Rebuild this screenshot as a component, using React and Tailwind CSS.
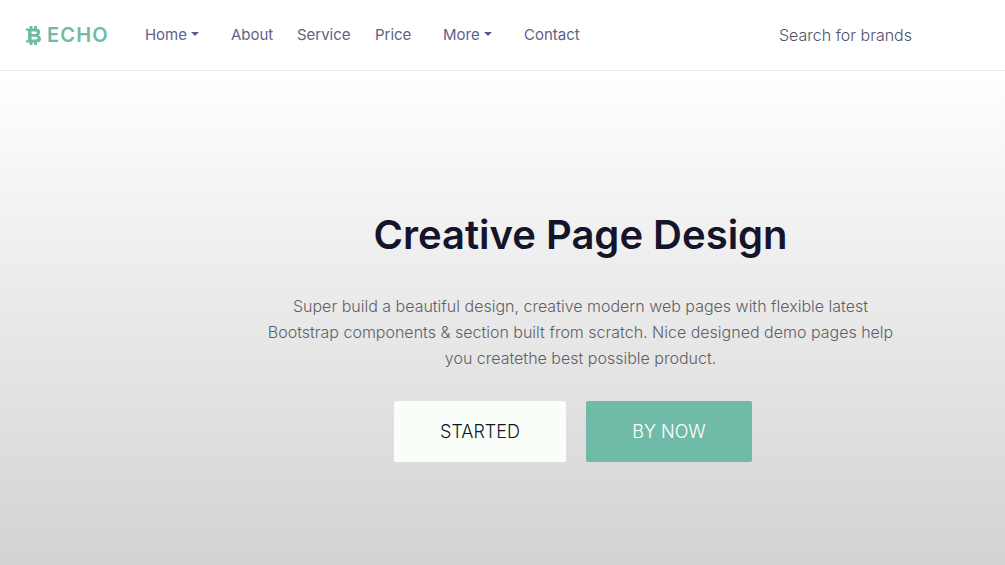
import React from "react";

const Caret = () => (
  <span className="ml-[4px] inline-block h-0 w-0 border-x-[4px] border-t-[4px] border-x-transparent border-t-[#5a5c82] align-[4px]" />
);

const Link = ({ className = "", children }) => (
  <a className={`text-[15px] leading-[24px] text-[#5f6186] whitespace-nowrap ${className}`}>{children}</a>
);

const Logo = () => (
  <svg viewBox="0 0 15 19" className="h-[19px] w-[15px]" fill="currentColor" fillRule="evenodd">
    <path d="M3.5 0H6.5V3H3.5ZM8 0H11V3H8ZM3.5 16H6.5V19H3.5ZM8 16H11V19H8Z" />
    <path d="M0 2.5H10Q14.2 2.5 14.2 6.3Q14.2 8.4 12.6 9.2Q15 10 15 12.8Q15 16.5 11 16.5H0V14.2H2V4.8H0ZM5.6 5.6V8H9.4Q10.8 8 10.8 6.8Q10.8 5.6 9.4 5.6ZM5.6 10.8V13.4H10Q11.6 13.4 11.6 12.1Q11.6 10.8 10 10.8Z" />
  </svg>
);

export default function App() {
  return (
    <div className="h-[565px] w-full overflow-hidden bg-white font-['Inter',sans-serif]">
      <header className="flex h-[71px] items-center border-b border-[#ebebed] bg-white pl-[26px]">
        <div className="flex items-center text-[#6fbba8]">
          <Logo />
          <span className="ml-[6px] text-[20px] font-semibold leading-[24px] tracking-[1.2px]">ECHO</span>
        </div>
        <nav className="ml-[36px] flex items-center">
          <Link className="w-[86px]">Home<Caret /></Link>
          <Link className="w-[66px]">About</Link>
          <Link className="w-[78px]">Service</Link>
          <Link className="w-[68px]">Price</Link>
          <Link className="w-[81px]">More<Caret /></Link>
          <Link>Contact</Link>
        </nav>
        <div className="ml-auto mr-[93px] text-[16px] font-light leading-[24px] text-[#50506a]">Search for brands</div>
      </header>
      <main className="flex h-[494px] flex-col items-center bg-gradient-to-b from-white to-[#d3d3d3] pl-[156px] pt-[137px]">
        <h1 className="text-[40px] font-semibold leading-[54px] text-[#14142b]">Creative Page Design</h1>
        <p className="mt-[31px] w-[640px] text-center text-[16px] font-light leading-[26px] text-[#5f5f66]">
          Super build a beautiful design, creative modern web pages with flexible latest Bootstrap components &amp; section built from scratch. Nice designed demo pages help you createthe best possible product.
        </p>
        <div className="mr-[15px] mt-[30px] flex gap-[20px]">
          <button className="h-[61px] w-[172px] rounded-[2px] bg-[#f9fff8] text-[18px] font-light text-[#14142b]">STARTED</button>
          <button className="h-[61px] w-[166px] rounded-[2px] bg-[#6fbba8] text-[18px] font-light text-white">BY NOW</button>
        </div>
      </main>
    </div>
  );
}
